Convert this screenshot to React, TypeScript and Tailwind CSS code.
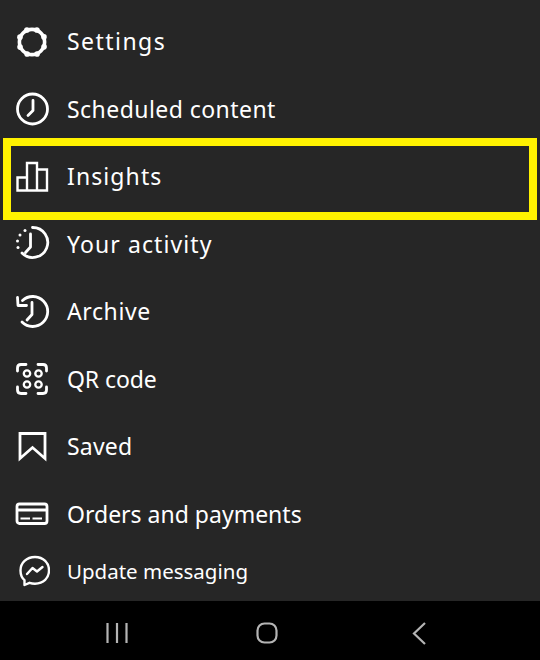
import React from "react";

const s = { fill: "none", stroke: "white", strokeWidth: 2.8, strokeLinecap: "round" as const, strokeLinejoin: "round" as const };
const box = "w-[36px] h-[36px] shrink-0";

function Ic({ children }: { children: React.ReactNode }) {
  return <svg viewBox="0 0 36 36" className={box}>{children}</svg>;
}

const bumps = [0, 45, 90, 135, 180, 225, 270, 315];

const Settings = () => (
  <Ic>
    <circle cx="18" cy="18" r="12.6" {...s} strokeWidth={3.6} />
    {bumps.map((a) => (
      <circle key={a} cx={18 + 13 * Math.cos(((a + 22) * Math.PI) / 180)} cy={18 + 13 * Math.sin(((a + 22) * Math.PI) / 180)} r="2.8" fill="white" />
    ))}
  </Ic>
);
const Clock = () => (
  <Ic>
    <circle cx="18.5" cy="18" r="15" {...s} />
    <path d="M19 9.5V19.5L14 24.5" {...s} />
  </Ic>
);
const Bars = () => (
  <Ic>
    <path d="M3.5 31.5V18.5H13V31.5ZM13 31.5V4H23V31.5ZM23 31.5V10.5H33V31.5Z" {...s} strokeWidth={2.4} strokeLinecap="butt" strokeLinejoin="miter" />
  </Ic>
);
const Activity = () => (
  <Ic>
    <path d="M18.5 1.5A15 15 0 1 1 8 27" {...s} />
    <path d="M16.5 8V21L11.5 26.5" {...s} />
    <circle cx="11" cy="4.5" r="1.5" fill="white" />
    <circle cx="6" cy="9" r="1.5" fill="white" />
    <circle cx="3.5" cy="15" r="1.5" fill="white" />
    <circle cx="4" cy="21.5" r="1.5" fill="white" />
  </Ic>
);
const Archive = () => (
  <Ic>
    <path d="M8.5 6.5A15 15 0 1 1 8 28" {...s} />
    <path d="M3.5 3.5L4 11.5L12.5 11.5" {...s} />
    <path d="M18 8.5V20.5L13 26" {...s} />
  </Ic>
);
const QR = () => (
  <Ic>
    <path d="M3.5 10V7Q3.5 3.5 7 3.5H12M24 3.5H29Q32.5 3.5 32.5 7V10M32.5 26V29Q32.5 32.5 29 32.5H24M12 32.5H7Q3.5 32.5 3.5 29V26" {...s} />
    <circle cx="13" cy="12.5" r="3.2" {...s} strokeWidth={2.3} />
    <circle cx="24.5" cy="12.5" r="3.2" {...s} strokeWidth={2.3} />
    <circle cx="13" cy="23.5" r="3.2" {...s} strokeWidth={2.3} />
    <circle cx="24.5" cy="23.5" r="3.2" {...s} strokeWidth={2.3} />
  </Ic>
);
const Bookmark = () => (
  <Ic>
    <path d="M6 4.5H31V29.5L18.5 18.5L6 29.5Z" {...s} strokeLinejoin="miter" />
  </Ic>
);
const Card = () => (
  <Ic>
    <rect x="3" y="8" width="30" height="19.5" rx="2.5" {...s} />
    <path d="M3 14H33" {...s} strokeWidth={3} strokeLinecap="butt" />
    <path d="M6.5 22.5H16M18.5 22.5H28" {...s} strokeWidth={2} strokeLinecap="butt" />
  </Ic>
);
const Messenger = () => (
  <Ic>
    <path d="M21 4C12.5 4 6.5 10 6.5 17.5C6.5 21.5 8 25 10.5 27.2V32L15.5 29.8C17.2 30.4 19 30.7 21 30.7C29.5 30.7 35 25 35 17.5C35 10 29.5 4 21 4Z" {...s} strokeWidth={2.4} />
    <path d="M13 21L18.5 15L23 18.5L28.5 14" {...s} strokeWidth={2.4} />
  </Ic>
);

const rows: { Icon: () => React.ReactElement; label: string; track: string }[] = [
  { Icon: Settings, label: "Settings", track: "tracking-[1.45px]" },
  { Icon: Clock, label: "Scheduled content", track: "tracking-[0.45px]" },
  { Icon: Bars, label: "Insights", track: "tracking-[1.1px]" },
  { Icon: Activity, label: "Your activity", track: "tracking-[1.1px]" },
  { Icon: Archive, label: "Archive", track: "tracking-[0.6px]" },
  { Icon: QR, label: "QR code", track: "tracking-[-0.1px]" },
  { Icon: Bookmark, label: "Saved", track: "tracking-[0.2px]" },
  { Icon: Card, label: "Orders and payments", track: "tracking-[0px]" },
];

export default function App() {
  return (
    <div className="relative w-[540px] h-[660px] flex flex-col bg-[#262626] overflow-hidden font-['Noto_Sans',sans-serif] text-white">
      <div className="flex-1 flex flex-col pt-[8px]">
        {rows.map(({ Icon, label, track }) => (
          <div key={label} className="h-[67.5px] flex items-center pl-[14px] gap-[17px]">
            <Icon />
            <span className={`text-[23px] leading-none ${track}`}>{label}</span>
          </div>
        ))}
        <div className="h-[46px] flex items-center pl-[14px] gap-[17px]">
          <Messenger />
          <span className="text-[20.5px] leading-none tracking-[0px]">Update messaging</span>
        </div>
      </div>

      <div className="h-[59px] bg-black flex items-center shrink-0 pt-[5px]">
        <div className="w-[129px] flex justify-end">
          <svg viewBox="0 0 24 24" className="w-[24px] h-[24px]">
            <path d="M2.5 2V22M12 2V22M21.5 2V22" fill="none" stroke="#b4b4b4" strokeWidth="2.2" />
          </svg>
        </div>
        <div className="ml-[126px]">
          <svg viewBox="0 0 24 24" className="w-[24px] h-[24px]">
            <rect x="2.5" y="2.5" width="19" height="19" rx="7" fill="none" stroke="#b4b4b4" strokeWidth="2.2" />
          </svg>
        </div>
        <div className="ml-[128px]">
          <svg viewBox="0 0 24 24" className="w-[24px] h-[24px]">
            <path d="M18 2L7 12.5L18 23" fill="none" stroke="#b4b4b4" strokeWidth="2.2" />
          </svg>
        </div>
      </div>

      <div className="absolute left-[3px] top-[138px] w-[534px] h-[82px] border-[8px] border-[#fff200]" />
    </div>
  );
}
